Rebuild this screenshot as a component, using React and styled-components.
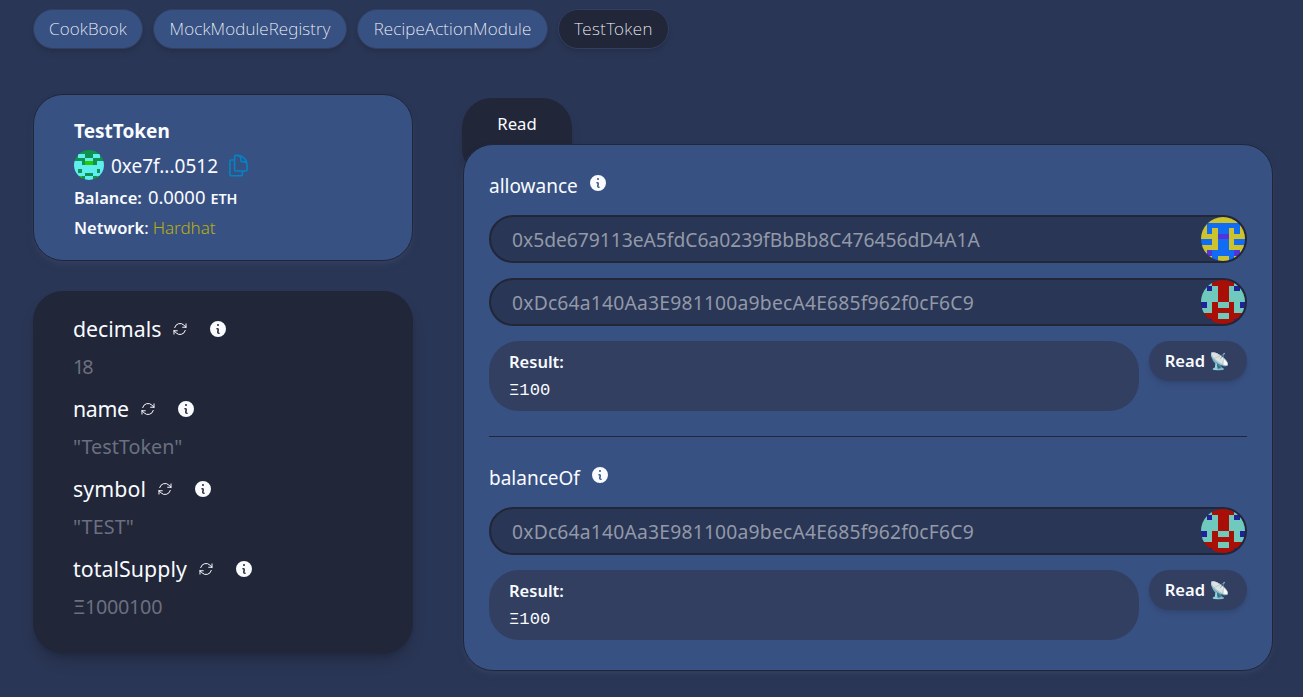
import React from 'react';
import styled, { createGlobalStyle } from 'styled-components';
import { HiMiniInformationCircle, HiOutlineArrowPath, HiOutlineDocumentDuplicate } from 'react-icons/hi2';

const Global = createGlobalStyle`
  *, *::before, *::after { box-sizing: border-box; }
  body {
    margin: 0;
    background: #2a3655;
    color: #f9fbff;
    font-family: "Noto Sans", sans-serif;
    font-size: 16px;
    line-height: 24px;
  }
`;

const Page = styled.main`
  height: 697px;
  overflow: hidden;
  padding: 9px 30px 0 33px;
`;

const Tabs = styled.nav`
  display: flex;
  gap: 10px;
`;

const Tab = styled.button`
  width: ${(p) => p.$width}px;
  height: 40px;
  padding: 0;
  border: 1px solid #323f61;
  border-radius: 20px;
  background: ${(p) => (p.$active ? '#212638' : '#385183')};
  color: #f9fbff;
  font: 200 17px/24px "Noto Sans", sans-serif;
  letter-spacing: ${(p) => p.$spacing}px;
  white-space: nowrap;
  box-shadow: 0 4px 6px -1px rgba(0, 0, 0, 0.1), 0 2px 4px -2px rgba(0, 0, 0, 0.1);
`;

const Columns = styled.div`
  display: grid;
  grid-template-columns: 380px 810px;
  column-gap: 50px;
  padding-top: 45px;
`;

const Sidebar = styled.aside`
  display: flex;
  flex-direction: column;
  gap: 30px;
`;

const Summary = styled.section`
  height: 167px;
  padding: 24px 39px 24px 40px;
  border: 1px solid #212638;
  border-radius: 30px;
  background: #385183;
  box-shadow: 0 4px 6px -1px #323f61, 0 2px 4px -2px #323f61;
`;

const Title = styled.div`
  font-size: 19px;
  font-weight: 700;
  line-height: 24px;
`;

const AddressRow = styled.div`
  display: flex;
  align-items: center;
  height: 30px;
  margin-top: 7px;
  font-size: 19px;
`;

const AddressText = styled.span`
  margin: 2px 8px 0 7px;
`;

const CopyIcon = styled(HiOutlineDocumentDuplicate)`
  width: 25px;
  height: 25px;
  color: #0284c7;
`;

const Detail = styled.div`
  display: flex;
  align-items: baseline;
  height: ${(p) => p.$height}px;
  margin-top: ${(p) => p.$top || 0}px;
  padding-top: 3px;
  font-size: 16.5px;
`;

const Strong = styled.span`
  font-weight: 600;
`;

const Balance = styled.span`
  margin: 0 5px 0 6px;
  font-size: 18.4px;
`;

const Unit = styled.span`
  font-size: 14.4px;
  font-weight: 600;
`;

const Network = styled.span`
  margin-left: 4px;
  color: #bbaf0b;
  font-size: 17px;
  font-weight: 300;
`;

const Variables = styled.section`
  height: 362px;
  padding: 24px 40px;
  border-radius: 30px;
  background: #212638;
  box-shadow: 0 10px 15px -3px rgba(0, 0, 0, 0.2), 0 4px 6px -4px rgba(0, 0, 0, 0.2);
`;

const Variable = styled.div`
  height: 80px;
`;

const VariableHead = styled.div`
  display: flex;
  align-items: center;
  height: 27px;
  font-size: 21.3px;
  letter-spacing: ${(p) => p.$spacing}px;
`;

const RefreshIcon = styled(HiOutlineArrowPath)`
  width: 16px;
  height: 16px;
  margin-left: 11px;
`;

const InfoIcon = styled(HiMiniInformationCircle)`
  width: 20px;
  height: 20px;
  margin: ${(p) => p.$margin};
`;

const VariableValue = styled.div`
  height: 24px;
  margin-top: 12px;
  color: #6b7080;
  font-size: 19.8px;
  line-height: 26px;
  letter-spacing: ${(p) => p.$spacing}px;
`;

const Methods = styled.section`
  display: flex;
  flex-direction: column;
  align-items: flex-start;
  padding-top: 4px;
`;

const MethodsTab = styled.div`
  width: 110px;
  height: 80px;
  margin-bottom: -34px;
  margin-left: -1px;
  padding-top: 14px;
  border-radius: 30px;
  background: #212638;
  box-shadow: 0 10px 15px -3px rgba(0, 0, 0, 0.1), 0 4px 6px -4px rgba(0, 0, 0, 0.1);
  font-size: 16.7px;
  text-align: center;
`;

const MethodsPanel = styled.div`
  position: relative;
  width: 810px;
  height: 527px;
  padding: 25px;
  border: 1px solid #212638;
  border-radius: 30px;
  background: #385183;
  box-shadow: 0 4px 6px -1px #323f61, 0 2px 4px -2px #323f61;
`;

const Method = styled.div`
  padding-top: ${(p) => (p.$divided ? 25 : 0)}px;
  margin-top: ${(p) => (p.$divided ? 25 : 0)}px;
  border-top: ${(p) => (p.$divided ? '1px solid #212638' : '0')};
`;

const MethodName = styled.div`
  display: flex;
  align-items: center;
  height: 30px;
  margin-bottom: 15px;
  padding-top: 2px;
  font-size: 19px;
`;

const Field = styled.div`
  display: flex;
  align-items: center;
  justify-content: space-between;
  height: 48px;
  margin-bottom: 15px;
  padding-left: 21px;
  border: 2px solid #212638;
  border-radius: 24px;
  background: #2a3655;
  color: #9299a8;
  font-size: 19.3px;
  letter-spacing: ${(p) => p.$spacing}px;
`;

const FieldText = styled.span`
  padding-top: 2px;
`;

const ResultRow = styled.div`
  display: flex;
  justify-content: space-between;
  align-items: flex-start;
`;

const Result = styled.div`
  width: 650px;
  height: 70px;
  padding: 9px 20px;
  border-radius: 30px;
  background: #323f61;
  font-size: 16.5px;
  font-weight: 600;
`;

const ResultValue = styled.pre`
  margin: 5px 0 0;
  font: 400 17.2px/24px "Liberation Mono", monospace;
`;

const ReadButton = styled.button`
  width: 98px;
  height: 40px;
  padding: 0 1px 0 0;
  border: 0;
  border-radius: 20px;
  background: #323f61;
  color: #f9fbff;
  font: 600 16.5px/24px "Noto Sans", sans-serif;
  white-space: nowrap;
  box-shadow: 0 4px 6px -1px rgba(0, 0, 0, 0.1), 0 2px 4px -2px rgba(0, 0, 0, 0.1);
`;

const AvatarSvg = styled.svg`
  flex: none;
  width: ${(p) => p.$size}px;
  height: ${(p) => p.$size}px;
  border-radius: 50%;
`;

const avatars = {
  green: {
    colors: ['#11934f', '#5eeeef', '#28c805'],
    rows: ['0000', '0110', '0001', '1102', '1111', '1011', '1110', '1201'],
  },
  yellow: {
    colors: ['#cdc32f', '#126cf3', '#5235da'],
    rows: ['0000', '0111', '0101', '0002', '1101', '0001', '0211', '0010'],
  },
  red: {
    colors: ['#a90e07', '#70c9bd', '#1f2298'],
    rows: ['1100', '1210', '1110', '1110', '2101', '1100', '0001', '0200'],
  },
};

function Avatar({ name, size }) {
  const { colors, rows } = avatars[name];
  return (
    <AvatarSvg $size={size} viewBox="0 0 8 8" shapeRendering="crispEdges">
      {rows.map((row, y) =>
        [...row, ...[...row].reverse()].map((c, x) => (
          <rect key={`${x}-${y}`} x={x} y={y} width="1" height="1" fill={colors[c]} />
        ))
      )}
    </AvatarSvg>
  );
}

const contracts = [
  ['CookBook', 110, 0.15],
  ['MockModuleRegistry', 194, 0.15],
  ['RecipeActionModule', 191, 0.17],
  ['TestToken', 111, 0.4],
];

const variables = [
  ['decimals', '18', -2, 0],
  ['name', '"TestToken"', 0, -0.3],
  ['symbol', '"TEST"', 0.1, 0.1],
  ['totalSupply', 'Ξ1000100', -0.3, 0.07],
];

const first = ['0x5de679113eA5fdC6a0239fBbBb8C476456dD4A1A', -0.04];
const second = ['0xDc64a140Aa3E981100a9becA4E685f962f0cF6C9', 0.2];

const methods = [
  { name: 'allowance', fields: [[first, 'yellow'], [second, 'red']] },
  { name: 'balanceOf', fields: [[second, 'red']] },
];

export default function App() {
  return (
    <Page>
      <Global />
      <Tabs>
        {contracts.map(([name, width, spacing]) => (
          <Tab key={name} $width={width} $spacing={spacing} $active={name === 'TestToken'}>{name}</Tab>
        ))}
      </Tabs>
      <Columns>
        <Sidebar>
          <Summary>
            <Title>TestToken</Title>
            <AddressRow>
              <Avatar name="green" size={30} />
              <AddressText>0xe7f...0512</AddressText>
              <CopyIcon />
            </AddressRow>
            <Detail $top={2} $height={31}>
              <Strong>Balance:</Strong>
              <Balance>0.0000</Balance>
              <Unit>ETH</Unit>
            </Detail>
            <Detail $height={30}>
              <Strong>Network</Strong>:<Network>Hardhat</Network>
            </Detail>
          </Summary>
          <Variables>
            {variables.map(([name, value, spacing, nameSpacing]) => (
              <Variable key={name}>
                <VariableHead $spacing={nameSpacing}>
                  {name}
                  <RefreshIcon />
                  <InfoIcon $margin="0 0 0 20px" />
                </VariableHead>
                <VariableValue $spacing={spacing}>{value}</VariableValue>
              </Variable>
            ))}
          </Variables>
        </Sidebar>
        <Methods>
          <MethodsTab>Read</MethodsTab>
          <MethodsPanel>
            {methods.map(({ name, fields }, i) => (
              <Method key={name} $divided={i > 0}>
                <MethodName>
                  {name}
                  <InfoIcon $margin="-7px 0 0 10px" />
                </MethodName>
                {fields.map(([[address, spacing], avatar]) => (
                  <Field key={address} $spacing={spacing}>
                    <FieldText>{address}</FieldText>
                    <Avatar name={avatar} size={44} />
                  </Field>
                ))}
                <ResultRow>
                  <Result>
                    Result:
                    <ResultValue>Ξ100</ResultValue>
                  </Result>
                  <ReadButton>Read 📡</ReadButton>
                </ResultRow>
              </Method>
            ))}
          </MethodsPanel>
        </Methods>
      </Columns>
    </Page>
  );
}
